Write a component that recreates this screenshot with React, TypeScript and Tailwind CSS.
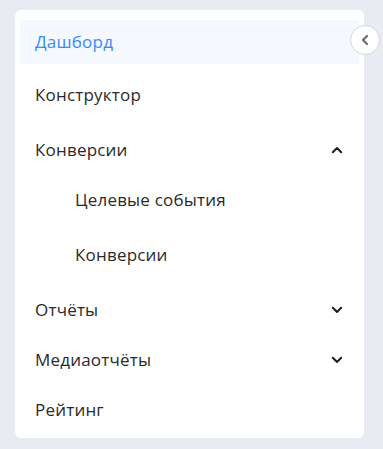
type Row = {
  label: string;
  sub?: boolean;
  chevron?: 'up' | 'down';
  active?: boolean;
  cls: string;
};

// row spacing follows the reference exactly
const rows: Row[] = [
  { label: 'Дашборд', active: true, cls: 'h-[44px]' },
  { label: 'Конструктор', cls: 'h-[50px] mt-[6px]' },
  { label: 'Конверсии', chevron: 'up', cls: 'h-[50px] mt-[5px]' },
  { label: 'Целевые события', sub: true, cls: 'h-[50px]' },
  { label: 'Конверсии', sub: true, cls: 'h-[50px] mt-[5px]' },
  { label: 'Отчёты', chevron: 'down', cls: 'h-[50px] mt-[5px]' },
  { label: 'Медиаотчёты', chevron: 'down', cls: 'h-[50px]' },
  { label: 'Рейтинг', cls: 'h-[50px]' },
];

function Chevron({ up }: { up?: boolean }) {
  return (
    <svg width="12" height="8" viewBox="0 0 12 8" className={up ? 'rotate-180' : ''}>
      <path d="M1.8 1.8L6 6l4.2-4.2" fill="none" stroke="#1f1f1f" strokeWidth="2" strokeLinecap="round" strokeLinejoin="round" />
    </svg>
  );
}

export default function App() {
  return (
    <div className="min-h-[449px] w-[383px] bg-[#e8ebf2] pt-[10px] pl-[15px]" style={{ fontFamily: '"Open Sans", "Noto Sans", sans-serif' }}>
      <nav className="relative w-[349px] h-[428px] bg-white rounded-md px-[5px] pt-[10px]">
        <ul className="flex flex-col">
          {rows.map((r, i) => (
            <li
              key={i}
              className={`${r.cls} flex items-center justify-between pr-[16px] text-[17px] tracking-[0.2px] ${r.sub ? 'pl-[55px]' : 'pl-[15px]'} ${
                r.active ? 'bg-[#f5f8ff] text-[#3a88f6]' : 'text-[#2a2a2a]'
              }`}
            >
              <span>{r.label}</span>
              {r.chevron && <Chevron up={r.chevron === 'up'} />}
            </li>
          ))}
        </ul>
        <button className="absolute right-[-16px] top-[15px] size-[30px] rounded-full bg-white border border-[#d6d6d6] flex items-center justify-center">
          <svg width="10" height="12" viewBox="0 0 10 12">
            <path d="M7 2L3 6l4 4" fill="none" stroke="#6b6b6b" strokeWidth="2.2" strokeLinecap="round" strokeLinejoin="round" />
          </svg>
        </button>
      </nav>
    </div>
  );
}
